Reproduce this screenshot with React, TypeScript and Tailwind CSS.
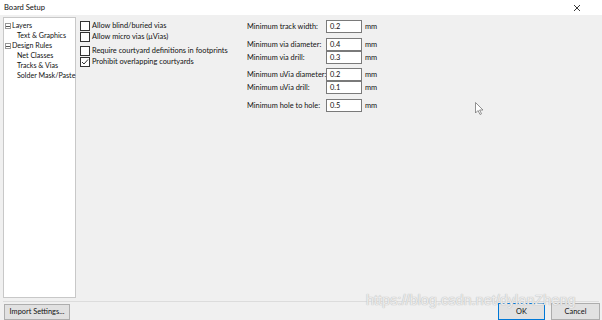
import React from "react";

const font = { fontFamily: 'Lato, "Open Sans", sans-serif' };

function Box({ checked }: { checked?: boolean }) {
  return (
    <div className="w-[10px] h-[10px] border border-[#333] bg-white flex items-center justify-center shrink-0">
      {checked && (
        <svg width="8" height="8" viewBox="0 0 8 8">
          <path d="M1 4 L3 6 L7 1.5" fill="none" stroke="#333" strokeWidth="1" />
        </svg>
      )}
    </div>
  );
}

function Check({ label, checked }: { label: string; checked?: boolean }) {
  return (
    <div className="flex items-center gap-[2px] h-[11px] whitespace-nowrap">
      <Box checked={checked} />
      <span>{label}</span>
    </div>
  );
}

function Field({ label, value }: { label: string; value: string }) {
  return (
    <div className="flex items-center h-[13px] whitespace-nowrap">
      <span className="w-[79px] shrink-0">{label}</span>
      <div className="w-[36px] h-[13px] border border-[#7a7a7a] bg-white pl-[3px] leading-[11px] shrink-0">{value}</div>
      <span className="ml-[3px]">mm</span>
    </div>
  );
}

function Minus() {
  return (
    <div className="w-[6px] h-[6px] border border-[#999] flex items-center justify-center mr-[1px] shrink-0">
      <div className="w-[4px] h-px bg-[#555]" />
    </div>
  );
}

export default function App() {
  return (
    <div className="w-[602px] h-[320px] bg-[#f0f0f0] flex flex-col overflow-hidden text-[7.4px] text-[#111] relative" style={font}>
      <div className="h-[15px] bg-white flex items-center justify-between px-[4px] shrink-0">
        <span className="text-[7.6px]">Board Setup</span>
        <svg width="8" height="8" viewBox="0 0 8 8" className="mr-[17px]">
          <path d="M1 1 L7 7 M7 1 L1 7" stroke="#222" strokeWidth="0.9" />
        </svg>
      </div>
      <div className="flex flex-1 min-h-0 pt-[2px] pl-[3px]">
        <div className="w-[73px] h-[281px] bg-white border border-[#c8c8c8] pt-[3px] pl-[1px] leading-[10px] whitespace-nowrap shrink-0 text-[7.1px]">
          <div className="flex items-center"><Minus /><span>Layers</span></div>
          <div className="pl-[12px]">Text &amp; Graphics</div>
          <div className="flex items-center"><Minus /><span>Design Rules</span></div>
          <div className="pl-[12px]">Net Classes</div>
          <div className="pl-[12px]">Tracks &amp; Vias</div>
          <div className="pl-[12px]">Solder Mask/Paste</div>
        </div>
        <div className="flex flex-col pl-[4px] pt-[3px] w-[171px] shrink-0">
          <Check label="Allow blind/buried vias" />
          <Check label="Allow micro vias (μVias)" />
          <div className="h-[3px]" />
          <Check label="Require courtyard definitions in footprints" />
          <Check label="Prohibit overlapping courtyards" checked />
        </div>
        <div className="flex flex-col pt-[3px]">
          <Field label="Minimum track width:" value="0.2" />
          <div className="h-[5px]" />
          <Field label="Minimum via diameter:" value="0.4" />
          <Field label="Minimum via drill:" value="0.3" />
          <div className="h-[4px]" />
          <Field label="Minimum uVia diameter:" value="0.2" />
          <Field label="Minimum uVia drill:" value="0.1" />
          <div className="h-[5px]" />
          <Field label="Minimum hole to hole:" value="0.5" />
        </div>
      </div>
      <div className="h-px bg-[#dcdcdc] mx-[3px] shrink-0" />
      <div className="h-[18px] flex items-end justify-between pl-[4px] pr-[2px] shrink-0">
        <div className="w-[66px] h-[16px] bg-[#e1e1e1] border border-[#adadad] flex items-center justify-center whitespace-nowrap">Import Settings...</div>
        <div className="flex gap-[6px]">
          <div className="w-[47px] h-[17px] bg-[#e1e1e1] border border-[#0078d7] flex items-center justify-center">OK</div>
          <div className="w-[49px] h-[17px] bg-[#e1e1e1] border border-[#adadad] flex items-center justify-center">Cancel</div>
        </div>
      </div>
      <div
        className="absolute left-[366px] top-[290px] text-[14.5px] text-[#ececec] whitespace-nowrap"
        style={{ fontFamily: '"Liberation Sans", sans-serif', textShadow: "0 0 1px #bdbdbd, 0 0 1px #bdbdbd" }}
      >
        https://blog.csdn.net/dylanZheng
      </div>
      <svg className="absolute left-[475px] top-[102px]" width="9" height="14" viewBox="0 0 9 14">
        <path d="M0.5 0.5 L0.5 11 L3 8.5 L5 12.5 L6.5 11.8 L4.6 8 L8 8 Z" fill="#fff" stroke="#777" strokeWidth="0.8" />
      </svg>
    </div>
  );
}
